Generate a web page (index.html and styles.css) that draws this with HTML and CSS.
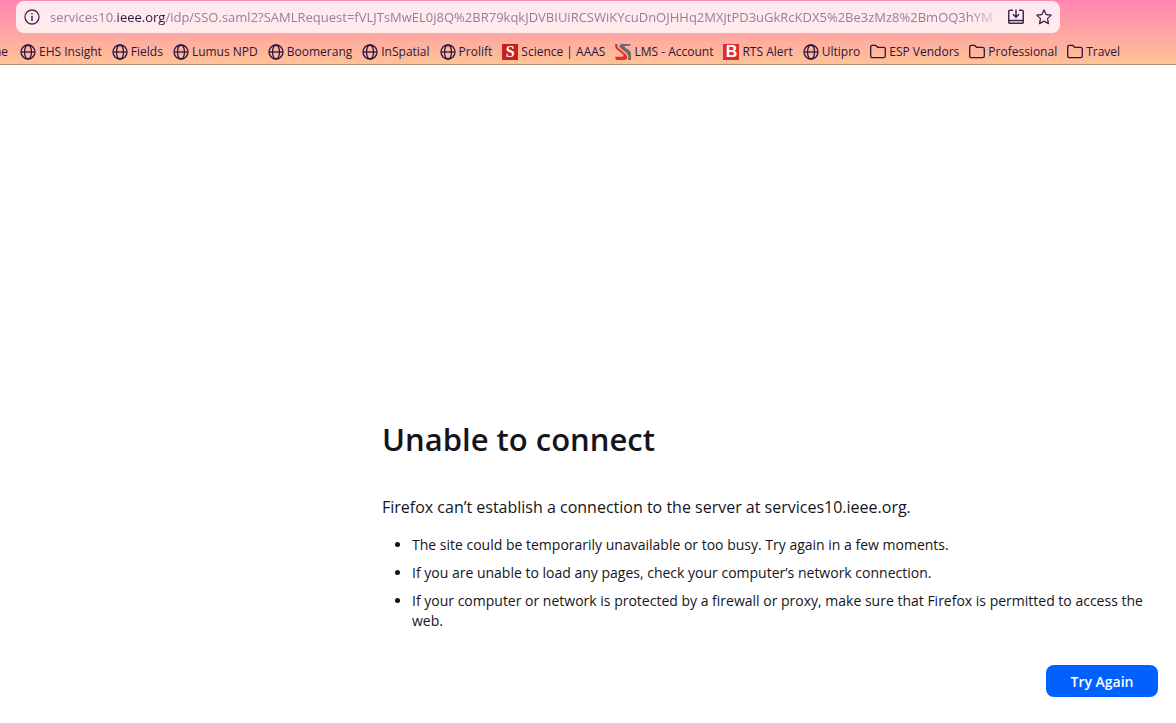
FILE: index.html
```
<!DOCTYPE html>
<html lang="en">
<head>
    <meta charset="UTF-8">
    <meta name="viewport" content="width=device-width, initial-scale=1.0">
    <title>Problem loading page</title>
    <link rel="stylesheet" href="styles.css">
</head>
<body>
    <svg class="symbols" aria-hidden="true">
        <symbol id="globe" viewBox="0 0 16 16">
            <g fill="none" stroke="currentColor" stroke-width="1.3">
                <circle cx="8" cy="8" r="7"/>
                <ellipse cx="8" cy="8" rx="3.5" ry="7"/>
                <path d="M1 8h14"/>
            </g>
        </symbol>
        <symbol id="folder" viewBox="0 0 16 16">
            <path d="M.7 12V3c0-1 .7-1.700 1.700-1.700h3.200l2 2h6c1 0 1.700.7 1.700 1.700v7c0 1-.7 1.700-1.700 1.700H2.400C1.400 13.700.7 13 .7 12z" fill="none" stroke="currentColor" stroke-width="1.3" stroke-linejoin="round"/>
        </symbol>
    </svg>

    <header class="toolbar">
        <div class="urlbar">
            <button type="button" class="icon-btn" aria-label="Site information">
                <svg class="icon" viewBox="0 0 16 16">
                    <circle cx="8" cy="8" r="7" fill="none" stroke="currentColor" stroke-width="1.3"/>
                    <path d="M8 7v5M8 4v1.6" fill="none" stroke="currentColor" stroke-width="1.5"/>
                </svg>
            </button>
            <div class="url">services10.<strong>ieee.org</strong>/idp/SSO.saml2?SAMLRequest=fVLJTsMwEL0j8Q%2BR79kqkJDVBIUiRCSWiKYcuDnOJHHq2MXjtPD3uGkRcKDX5%2Be3zMz8%2BmOQ3hYM</div>
            <button type="button" class="icon-btn" aria-label="Install site">
                <svg class="icon" viewBox="0 0 16 16">
                    <path d="M5 1.2H2.2C1.300 1.200.7 1.800.7 2.700v10.100c0 .9.6 1.500 1.500 1.500h11.600c.9 0 1.500-.6 1.500-1.500V2.700c0-.9-.6-1.500-1.500-1.500H11M.7 11.500h14.600M8 .5v7.600M5 5.300l3 3 3-3" fill="none" stroke="currentColor" stroke-width="1.5"/>
                </svg>
            </button>
            <button type="button" class="icon-btn" aria-label="Bookmark this page">
                <svg class="icon" viewBox="0 0 16 16">
                    <path d="M8 .9l2.100 4.600 5.100.6-3.700 3.500 1 5L8 12.100l-4.500 2.500 1-5L.8 6.100l5.100-.6z" fill="none" stroke="currentColor" stroke-width="1.3" stroke-linejoin="round"/>
                </svg>
            </button>
        </div>

        <nav class="bookmarks">
            <a href="#" class="clipped">ne</a>
            <a href="#"><svg class="icon"><use href="#globe"/></svg>EHS Insight</a>
            <a href="#"><svg class="icon"><use href="#globe"/></svg>Fields</a>
            <a href="#"><svg class="icon"><use href="#globe"/></svg>Lumus NPD</a>
            <a href="#"><svg class="icon"><use href="#globe"/></svg>Boomerang</a>
            <a href="#"><svg class="icon"><use href="#globe"/></svg>InSpatial</a>
            <a href="#"><svg class="icon"><use href="#globe"/></svg>Prolift</a>
            <a href="#"><span class="badge science">S</span>Science | AAAS</a>
            <a href="#">
                <svg class="icon" viewBox="0 0 16 16">
                    <path d="M16 0H8C4 0 3.500 2.500 6 4.500l5 4c2.500 2 3 4.500 2 7.500h3V10c0-2-1-3-2.500-4.200L10 3.500C9 2.500 9.500 1.800 11 1.800h4z" fill="#6b6b6d"/>
                    <path d="M0 0c0 3 .5 4.500 2.500 6l5 4c1.800 1.500 1 2.800-1 2.800H0L1 16h8c3.500 0 4.500-3.500 1.500-6L4.500 5C2.500 3.500 2 2 2.500 0z" fill="#e5302c"/>
                </svg>LMS - Account</a>
            <a href="#"><span class="badge rts">B</span>RTS Alert</a>
            <a href="#"><svg class="icon"><use href="#globe"/></svg>Ultipro</a>
            <a href="#"><svg class="icon"><use href="#folder"/></svg>ESP Vendors</a>
            <a href="#"><svg class="icon"><use href="#folder"/></svg>Professional</a>
            <a href="#"><svg class="icon"><use href="#folder"/></svg>Travel</a>
        </nav>
    </header>

    <main class="error-page">
        <div class="error-container">
            <h1>Unable to connect</h1>
            <p>Firefox can’t establish a connection to the server at services10.ieee.org.</p>
            <ul>
                <li>The site could be temporarily unavailable or too busy. Try again in a few moments.</li>
                <li>If you are unable to load any pages, check your computer’s network connection.</li>
                <li>If your computer or network is protected by a firewall or proxy, make sure that Firefox is permitted to access the web.</li>
            </ul>
            <div class="button-row">
                <button type="button" class="try-again">Try Again</button>
            </div>
        </div>
    </main>
</body>
</html>
```
FILE: styles.css
```
:root {
    --text: #15141a;
    --toolbar-text: #2b1640;
    --primary: #0061ff;
}

* {
    margin: 0;
    padding: 0;
    box-sizing: border-box;
}

body {
    min-height: 100vh;
    display: flex;
    flex-direction: column;
    background: white;
    color: var(--text);
    font-family: "Segoe UI", "Open Sans", "Noto Sans", sans-serif;
}

.symbols {
    display: none;
}

.icon {
    flex: none;
    display: block;
    width: 16px;
    height: 16px;
}

.toolbar {
    height: 65px;
    padding-top: 1px;
    overflow: hidden;
    background: linear-gradient(#ff86b1, #ffc296);
    border-bottom: 1px solid #b58a7c;
    color: var(--toolbar-text);
}

.urlbar {
    display: flex;
    align-items: center;
    height: 32px;
    margin-left: 16px;
    margin-right: 116px;
    padding: 0 8px;
    border-radius: 8px;
    background: rgba(255, 255, 255, 0.8);
}

.icon-btn {
    flex: none;
    border: none;
    background: none;
    color: #3f2a52;
    cursor: pointer;
}

.icon-btn + .icon-btn {
    margin-left: 12px;
}

.url {
    flex: 1;
    min-width: 0;
    margin: 0 6px 0 10px;
    overflow: hidden;
    white-space: nowrap;
    font-size: 13px;
    line-height: 20px;
    color: #967f99;
    mask-image: linear-gradient(to left, transparent, black 32px);
}

.url strong {
    font-weight: normal;
    color: var(--toolbar-text);
}

.bookmarks {
    display: flex;
    align-items: center;
    gap: 10px;
    height: 36px;
    margin-top: 1px;
    white-space: nowrap;
}

.bookmarks a {
    flex: none;
    display: flex;
    align-items: center;
    gap: 3px;
    color: var(--toolbar-text);
    font-size: 12px;
    line-height: 16px;
    text-decoration: none;
}

/* scrolled partly out of the bar */
.bookmarks .clipped {
    width: 10px;
    padding-right: 2px;
    justify-content: flex-end;
    overflow: hidden;
}

.badge {
    width: 16px;
    height: 16px;
    color: white;
    font-weight: bold;
    text-align: center;
}

.science {
    background: #c9201a;
    font-family: "Liberation Serif", serif;
    font-size: 16px;
}

.rts {
    background: #e32b2b;
    font-family: "Liberation Sans", sans-serif;
    font-size: 16px;
}

.error-page {
    flex: 1;
    display: flex;
    flex-direction: column;
    justify-content: flex-end;
    padding: 24px 18px 26px;
}

.error-container {
    width: 100%;
    max-width: 776px;
    margin-left: auto;
}

h1 {
    margin-bottom: 36px;
    font-size: 31px;
    font-weight: 600;
    line-height: 40px;
}

p {
    margin-bottom: 16px;
    font-size: 16px;
    line-height: 24px;
}

ul {
    padding-left: 30px;
}

li {
    margin-bottom: 8px;
    font-size: 14px;
    line-height: 20px;
}

.button-row {
    display: flex;
    justify-content: flex-end;
    margin-top: 34px;
}

.try-again {
    min-width: 112px;
    height: 32px;
    padding: 0 16px;
    border: none;
    border-radius: 8px;
    background: var(--primary);
    color: white;
    font-family: inherit;
    font-size: 14px;
    font-weight: 600;
    cursor: pointer;
}

.try-again:hover {
    background: #0250bb;
}
```
